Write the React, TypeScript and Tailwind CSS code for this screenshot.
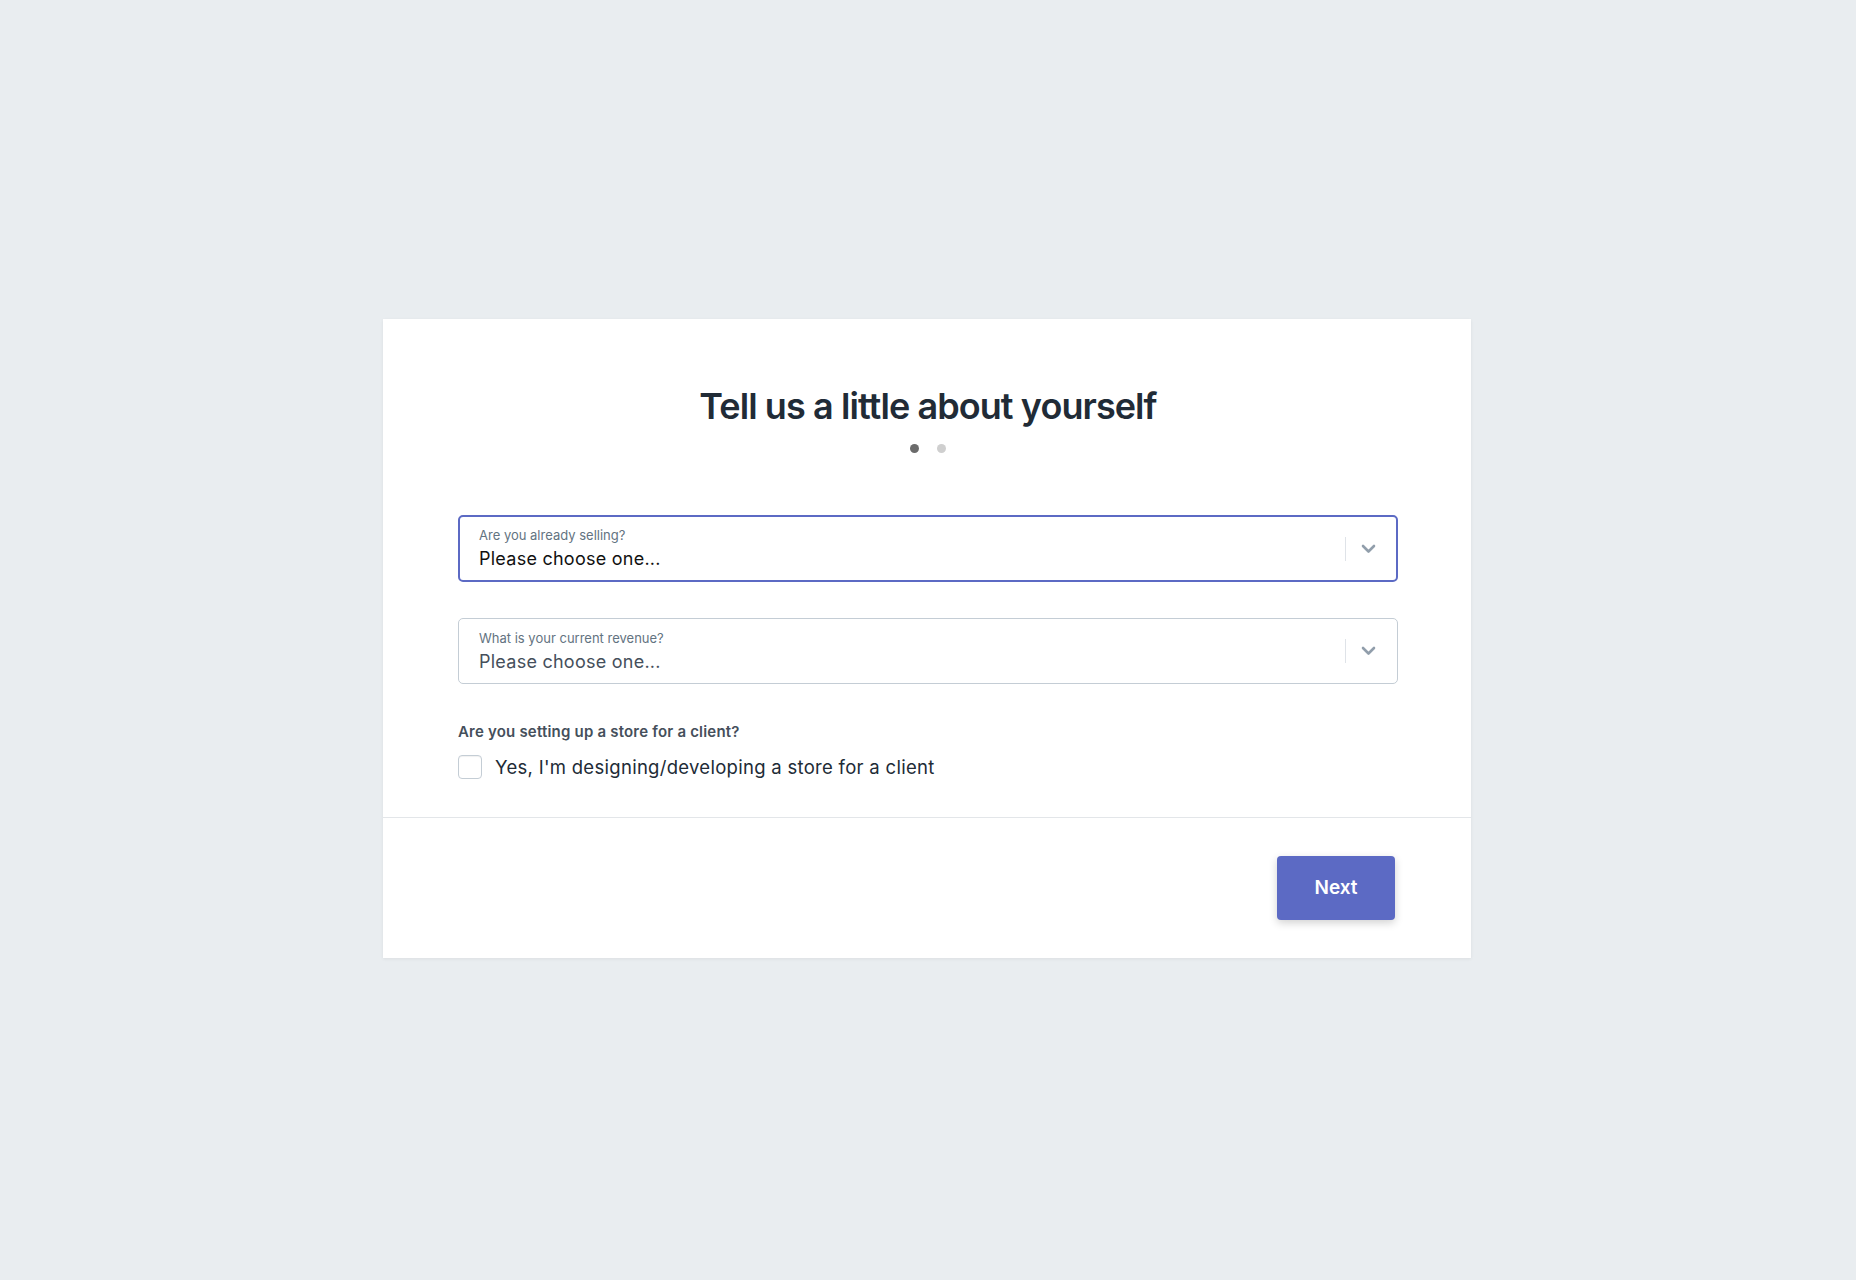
import React from "react";

function Chevron() {
  return (
    <svg width="15" height="10" viewBox="0 0 15 10" className="text-[#919eab]">
      <path d="M2 2L7.5 7.5L13 2" fill="none" stroke="currentColor" strokeWidth="2.6" strokeLinecap="round" strokeLinejoin="round" />
    </svg>
  );
}

function SelectField({ label, value, focused }: { label: string; value: string; focused?: boolean }) {
  return (
    <div
      className={
        focused
          ? "flex h-[67px] items-center rounded-[5px] border-2 border-[#5c6ac4] bg-white pl-[19px] pr-[20px]"
          : "flex h-[66px] items-center rounded-[5px] border border-[#c4cdd5] bg-white pl-[20px] pr-[21px]"
      }
    >
      <div className="flex flex-1 flex-col">
        <span className="text-[13px] leading-[16px] text-[#637381]">{label}</span>
        <span
          className={
            focused
              ? "mt-[5px] text-[18px] leading-[22px] tracking-[0.25px] text-[#111]"
              : "mt-[5px] text-[18px] leading-[22px] tracking-[0.25px] text-[#454f5b]"
          }
        >
          {value}
        </span>
      </div>
      <div className="h-[24px] w-px bg-[#dfe3e8]" />
      <div className="ml-[15px] flex items-center">
        <Chevron />
      </div>
    </div>
  );
}

export default function App() {
  return (
    <div
      className="flex min-h-screen items-center justify-center bg-[#e9edf0] pb-[3px] pr-[2px]"
      style={{ fontFamily: "Inter, 'Noto Sans', 'Liberation Sans', sans-serif" }}
    >
      <div className="w-[1088px] bg-white shadow-[0_1px_3px_rgba(63,63,68,0.08)]">
        <div className="pl-[75px] pr-[73px] pt-[65px] pb-[38px]">
          <h1 className="text-center text-[36px] font-semibold leading-[44px] tracking-[-0.92px] text-[#212b36]">
            Tell us a little about yourself
          </h1>
          <div className="mt-[16px] flex justify-center gap-[18px]">
            <span className="h-[9px] w-[9px] rounded-full bg-[#6b6b6b]" />
            <span className="h-[9px] w-[9px] rounded-full bg-[#cfcfcf]" />
          </div>
          <div className="mt-[62px]">
            <SelectField label="Are you already selling?" value="Please choose one..." focused />
          </div>
          <div className="mt-[36px]">
            <SelectField label="What is your current revenue?" value="Please choose one..." />
          </div>
          <div className="mt-[38px] text-[15px] font-semibold leading-[20px] tracking-[0.2px] text-[#454f5b]">
            Are you setting up a store for a client?
          </div>
          <label className="mt-[13px] flex items-center">
            <span className="h-[24px] w-[24px] rounded-[4px] border border-[#c4cdd5] bg-white shadow-[inset_0_1px_1px_rgba(0,0,0,0.06)]" />
            <span className="ml-[13px] text-[18.5px] leading-[24px] tracking-[0.29px] text-[#212b36]">
              Yes, I'm designing/developing a store for a client
            </span>
          </label>
        </div>
        <div className="flex justify-end border-t border-[#e3e6e9] px-[76px] py-[38px]">
          <button className="h-[64px] w-[118px] rounded-[4px] bg-[#5c6ac4] text-[19px] font-semibold text-white shadow-[0_3px_8px_rgba(0,0,0,0.18)]">
            Next
          </button>
        </div>
      </div>
    </div>
  );
}
